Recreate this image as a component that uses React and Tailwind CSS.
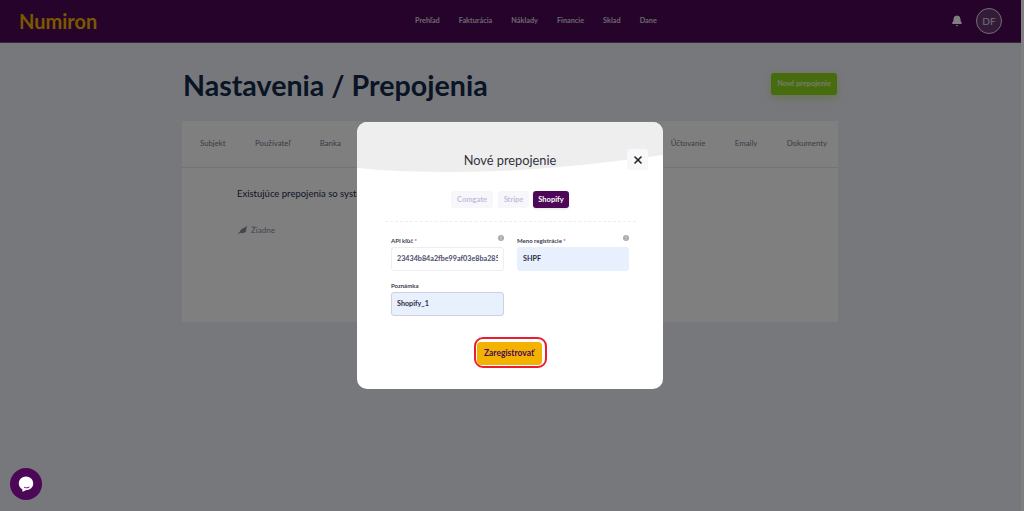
import React from "react";
import { X, Bell } from "lucide-react";

const font = { fontFamily: '"Lato", "Liberation Sans", sans-serif' };

function Field({ label, required, value, filled, strong }) {
  return (
    <div className="w-full">
      <div className="h-[11px]">
        <span className="block text-[6px] leading-[10px] font-bold text-[#3b3b4f]">
          {label}
          {required && <span className="text-red-500"> *</span>}
        </span>
      </div>
      <div
        className={`h-[24px] rounded-[3px] border flex items-center px-[5px] text-[7.2px] font-bold ${
          filled ? "bg-[#e8f0fe] text-[#2d2d3f]" : "bg-white text-[#4b4b6b]"
        } ${strong ? "border-[#cfcfe3]" : filled ? "border-[#e8f0fe]" : "border-[#eeeef2]"}`}
      >
        <span className="block w-full overflow-hidden whitespace-nowrap">{value}</span>
      </div>
    </div>
  );
}

function Info({ className = "" }) {
  return (
    <span className={`absolute top-[235px] w-[6px] h-[6px] rounded-full bg-[#aaaaaa] text-white text-[5px] leading-[6px] text-center ${className}`}>
      !
    </span>
  );
}

export default function App() {
  return (
    <div className="relative h-[511px] w-[1024px] overflow-hidden bg-[#eef0f8] flex" style={font}>
      <div className="w-[1021px] shrink-0">
        <header className="h-[43px] bg-[#4c0756] border-b border-[#6d4a76] flex items-center pl-[19px] pr-[19px]">
          <div className="text-[#f3b200] text-[20px] font-bold leading-none w-[396px]">Numiron</div>
          <nav className="flex gap-[19px] pt-[1px] text-[7.3px] font-bold text-[#d9cddc]">
            <span>Prehľad</span>
            <span>Fakturácia</span>
            <span>Náklady</span>
            <span>Financie</span>
            <span>Sklad</span>
            <span>Dane</span>
          </nav>
          <div className="ml-auto flex items-center gap-[13px]">
            <Bell size={12} className="text-white" fill="currentColor" />
            <div className="w-[26px] h-[26px] rounded-full border border-[#e5dbe7] bg-[#6b3774] text-white/80 text-[10px] flex items-center justify-center">
              DF
            </div>
          </div>
        </header>

        <main className="w-[656px] ml-[182px]">
          <div className="h-[78px] flex items-center justify-between">
            <h1 className="mt-[7px] text-[28.6px] font-bold text-[#12294a] leading-none pl-[1px]">Nastavenia / Prepojenia</h1>
            <button className="w-[66px] h-[22px] mt-[4px] mr-[1px] rounded-[3px] bg-[#8cd81c] text-white/80 text-[7.3px] font-bold shadow-[0_3px_8px_rgba(143,211,21,0.35)]">
              Nové prepojenie
            </button>
          </div>
          <section className="h-[201px] bg-white">
            <div className="h-[47px] border-b border-[#e8e8e8] flex items-center pl-[18px] pr-[11px] gap-[29.5px] text-[7.8px] text-[#77778f]">
              <span>Subjekt</span>
              <span>Používateľ</span>
              <span>Banka</span>
              <span className="flex-1" />
              <span>Účtovanie</span>
              <span>Emaily</span>
              <span>Dokumenty</span>
            </div>
            <div className="pl-[55px] pt-[20px]">
              <div className="text-[9.5px] text-[#1c2a4d] leading-[12px]">Existujúce prepojenia so systémami</div>
              <div className="mt-[24px] flex items-center gap-[4px] text-[8px] text-[#8a8a9e]">
                <svg width="10" height="10" viewBox="0 0 10 10" fill="currentColor">
                  <path d="M0.5 9.5L3 6.3C3.8 4.6 5.5 3.2 7 3L9.8 0.8L9 6.5C7.8 8 5.5 8.4 3.4 8Z" />
                </svg>
                Žiadne
              </div>
            </div>
          </section>
        </main>
      </div>
      <div className="w-[3px] bg-white" />

      <div className="absolute inset-0 bg-black/50" />

      <div className="absolute left-[357px] top-[122px] w-[306px] h-[267px] rounded-[10px] bg-white overflow-hidden">
        <svg className="absolute left-0 top-0" width="306" height="52" viewBox="0 0 306 52">
          <path d="M0 0H306V33C240 42 170 50 100 50C60 50 30 49 0 46Z" fill="#eeeeee" />
        </svg>
        <div className="relative flex flex-col items-center">
          <div className="h-[69px] w-full flex items-center justify-center pt-[5px] relative">
            <h2 className="mt-[3px] text-[12.8px] text-[#333340]">Nové prepojenie</h2>
            <button className="absolute left-[270px] top-[27px] w-[21px] h-[21px] rounded-[3px] bg-[#f8f8fa] flex items-center justify-center">
              <X size={12} strokeWidth={3.2} className="text-[#222]" />
            </button>
          </div>
          <div className="flex gap-[5px] text-[7.5px] font-bold h-[17px]">
            <span className="w-[42px] rounded-[3px] bg-[#f7f7fb] text-[#c0c0da] flex items-center justify-center">Comgate</span>
            <span className="w-[31px] rounded-[3px] bg-[#f7f7fb] text-[#c0c0da] flex items-center justify-center">Stripe</span>
            <span className="w-[36px] -ml-[1px] rounded-[3px] bg-[#4c0756] text-white flex items-center justify-center shadow-sm">Shopify</span>
          </div>
          <div className="mt-[13px] w-[251px] border-t border-dashed border-[#eeeeee]" />
          <div className="mt-[14px] w-[238px] grid grid-cols-[113px_112px] gap-x-[13px] gap-y-[10px]">
            <Field label="API kľúč" required value="23434b84a2fbe99af03e8ba285c" />
            <Field label="Meno registrácie" required value="SHPF" filled />
            <Field label="Poznámka" value="Shopify_1" filled strong />
          </div>
          <div className="mt-[21px] rounded-[9px] border-2 border-[#ee1c2e] pl-[1px] pt-[3px] pr-[3px] pb-[1px]">
            <button className="w-[65px] h-[23px] rounded-[4px] bg-[#f3b200] text-[#4c0756] text-[8.5px] font-bold flex items-center justify-center">
              Zaregistrovať
            </button>
          </div>
        </div>
      </div>
      <Info className="left-[498px]" />
      <Info className="left-[623px]" />

      <div className="absolute left-[10px] top-[468px] w-[32px] h-[32px] rounded-full bg-[#4c0756] flex items-center justify-center">
        <svg width="18" height="18" viewBox="0 0 18 18">
          <path d="M9 1.5C13 1.5 16.2 4.5 16.2 8.5C16.2 12.5 13 15 9.5 15L5.5 16.8L5.2 14.2C3 13 1.8 10.8 1.8 8.5C1.8 4.5 5 1.5 9 1.5Z" fill="#ffffff" />
          <path d="M7.5 12.4C9 13 10.5 13 12 12.2" stroke="#4c0756" strokeWidth="0.9" fill="none" strokeLinecap="round" />
        </svg>
      </div>
    </div>
  );
}
